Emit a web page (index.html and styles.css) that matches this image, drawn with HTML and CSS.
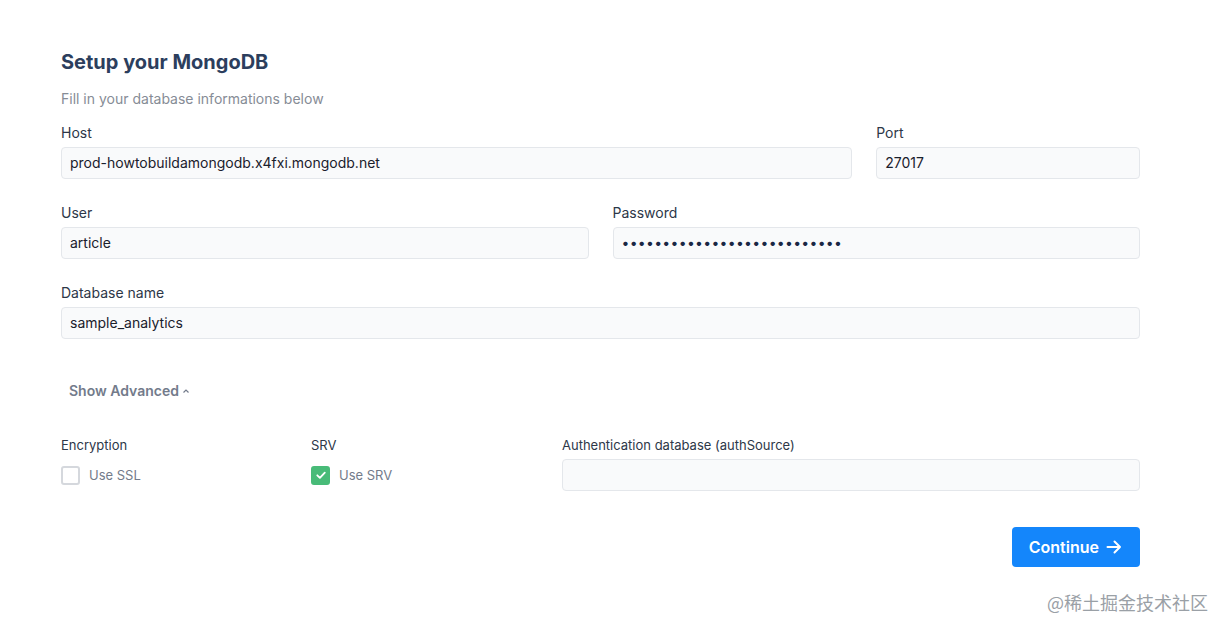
FILE: index.html
```html
<!DOCTYPE html>
<html lang="en">
<head>
  <meta charset="UTF-8">
  <title>Setup your MongoDB</title>
  <link rel="stylesheet" href="styles.css">
</head>
<body>
  <div class="container">
    <!-- Header -->
    <h1 class="title">Setup your MongoDB</h1>
    <p class="subtitle">Fill in your database informations below</p>

    <!-- Host / Port -->
    <div class="row">
      <div class="field wide">
        <label>Host</label>
        <div class="input">prod-howtobuildamongodb.x4fxi.mongodb.net</div>
      </div>
      <div class="field">
        <label>Port</label>
        <div class="input">27017</div>
      </div>
    </div>

    <!-- User / Password -->
    <div class="row">
      <div class="field">
        <label>User</label>
        <div class="input">article</div>
      </div>
      <div class="field">
        <label>Password</label>
        <div class="input password">•••••••••••••••••••••••••••</div>
      </div>
    </div>

    <div class="row">
      <div class="field">
        <label>Database name</label>
        <div class="input">sample_analytics</div>
      </div>
    </div>

    <button class="advanced">Show Advanced
      <svg width="8" height="8" viewBox="0 0 8 8"><path d="M1.5 5.5 L4 3 L6.5 5.5" fill="none" stroke="currentColor" stroke-width="1.2"/></svg>
    </button>

    <!-- Advanced -->
    <div class="advanced-grid">
      <div class="field">
        <label>Encryption</label>
        <div class="check">
          <span class="box"></span>
          <span>Use SSL</span>
        </div>
      </div>
      <div class="field">
        <label>SRV</label>
        <div class="check">
          <span class="box checked">
            <svg width="12" height="12" viewBox="0 0 12 12"><path d="M2.3 6.3 L4.9 8.8 L9.8 3.6" fill="none" stroke="#fff" stroke-width="1.8" stroke-linecap="round" stroke-linejoin="round"/></svg>
          </span>
          <span>Use SRV</span>
        </div>
      </div>
      <div class="field">
        <label>Authentication database (authSource)</label>
        <div class="input"></div>
      </div>
    </div>

    <div class="actions">
      <button class="btn">Continue
        <svg width="18" height="18" viewBox="0 0 18 18"><path d="M2.5 9 H15 M9.5 3.5 L15 9 L9.5 14.5" fill="none" stroke="#fff" stroke-width="2" stroke-linecap="round" stroke-linejoin="round"/></svg>
      </button>
    </div>
  </div>

  <div class="watermark">@稀土掘金技术社区</div>
</body>
</html>
```

FILE: styles.css
```css
body {
  margin: 0;
  font-family: Inter, "Noto Sans", sans-serif;
  background: #fff;
  color: #2d3748;
}

.container {
  width: 1079px;
  margin-left: 61px;
  padding-top: 48px;
}

.title {
  margin: 0;
  font-size: 20px;
  line-height: 28px;
  font-weight: 700;
  color: #2c3e5d;
}

.subtitle {
  margin: 13px 0 14px;
  font-size: 14px;
  line-height: 20px;
  color: #868c96;
}

.row {
  display: flex;
  gap: 24px;
  margin-bottom: 24px;
}

.row .field {
  flex: 1;
}

.row .field.wide {
  flex: 3;
}

.field label {
  display: block;
  font-size: 14px;
  line-height: 20px;
  font-weight: 400;
  color: #2d3748;
  margin-bottom: 4px;
}

.input {
  box-sizing: border-box;
  height: 32px;
  padding: 0 8px;
  font-size: 14px;
  line-height: 30px;
  color: #1a202c;
  background: #f9fafb;
  border: 1px solid #e4e7eb;
  border-radius: 4px;
}

.input.password {
  letter-spacing: 0.3px;
  color: #1a2744;
}

.advanced {
  display: flex;
  align-items: center;
  gap: 3px;
  margin: 34px 0 0;
  padding: 8px;
  border: none;
  background: none;
  font-family: inherit;
  font-size: 14px;
  line-height: 20px;
  font-weight: 600;
  color: #737b8b;
}

.advanced-grid {
  display: grid;
  grid-template-columns: 226px 227px 1fr;
  gap: 24px;
  margin-top: 26px;
}

.advanced-grid .field label {
  font-size: 13px;
}

.check {
  display: flex;
  align-items: center;
  gap: 9px;
  height: 32px;
  font-size: 13px;
  color: #737b8b;
}

.box {
  box-sizing: border-box;
  width: 19px;
  height: 19px;
  border: 2px solid #d5d8dd;
  border-radius: 3px;
  display: flex;
  align-items: center;
  justify-content: center;
}

.box.checked {
  background: #48bb78;
  border-color: #48bb78;
}

.actions {
  display: flex;
  justify-content: flex-end;
  margin-top: 36px;
}

.btn {
  display: flex;
  align-items: center;
  gap: 6px;
  height: 40px;
  padding: 0 17px;
  border: none;
  border-radius: 4px;
  background: #1486fb;
  color: #fff;
  font-family: inherit;
  font-size: 16px;
  font-weight: 600;
  cursor: pointer;
}

.watermark {
  position: absolute;
  left: 1047px;
  top: 589px;
  font-family: "Noto Sans CJK SC", sans-serif;
  font-size: 18px;
  line-height: 26px;
  color: #9aa0a6;
}
```
